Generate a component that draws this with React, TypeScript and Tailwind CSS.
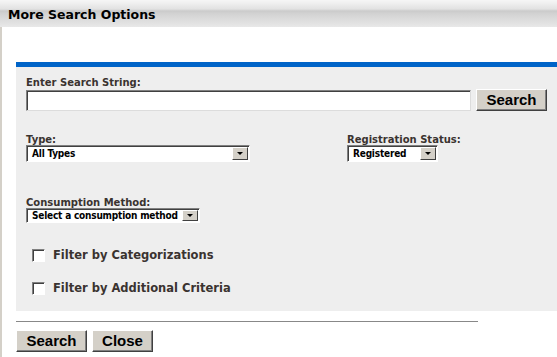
import React from 'react';

const verdana = { fontFamily: '"DejaVu Sans", Verdana, sans-serif' };
const tahoma = {
  fontFamily: '"DejaVu Sans Condensed", "DejaVu Sans", Tahoma, sans-serif',
  fontStretch: 'condensed',
};

function Select({ label, width, height }: { label: string; width: string; height: string }) {
  return (
    <div
      className={`${width} ${height} flex bg-white border border-t-[#808080] border-l-[#808080] border-b-white border-r-white shadow-[inset_1px_1px_0_#404040]`}
    >
      <div
        className="flex-1 pl-[5px] flex items-center text-[10px] leading-[12px] tracking-[-0.2px] font-bold text-black whitespace-nowrap overflow-hidden"
        style={tahoma}
      >
        {label}
      </div>
      <div className="w-[16px] bg-[#d4d0c8] border border-t-white border-l-white border-b-[#404040] border-r-[#404040] flex items-center justify-center mr-px my-px">
        <div className="w-0 h-0 border-l-[3px] border-r-[3px] border-t-[3px] border-l-transparent border-r-transparent border-t-black" />
      </div>
    </div>
  );
}

function Checkbox({ text }: { text: string }) {
  return (
    <div className="flex items-center ml-[6px] h-[13px]">
      <div className="w-[13px] h-[13px] bg-white border border-t-[#808080] border-l-[#808080] border-b-white border-r-white shadow-[inset_1px_1px_0_#404040]" />
      <span className="ml-[8px] text-[11.5px] font-bold text-[#3a3330]">{text}</span>
    </div>
  );
}

function Button({ text, width }: { text: string; width: string }) {
  return (
    <button
      className={`${width} h-[22px] bg-[#d4d0c8] border border-t-white border-l-white border-b-[#404040] border-r-[#404040] shadow-[inset_-1px_-1px_0_#808080] text-[15px] leading-[18px] font-bold text-black`}
      style={{ fontFamily: '"Liberation Sans", Arial, sans-serif' }}
    >
      {text}
    </button>
  );
}

export default function App() {
  return (
    <div className="w-[557px] h-[357px] bg-white overflow-hidden" style={verdana}>
      {/* Title bar */}
      <div className="h-[27px] bg-[linear-gradient(to_bottom,#f6f6f6_0px,#f0f0f0_3px,#e2e2e2_9px,#cbcbcb_11px,#d3d3d3_14px,#e8e8e8_27px)] pl-[8px] pt-[8px]">
        <h1 className="text-[12.5px] leading-[14px] font-bold text-black">More Search Options</h1>
      </div>

      <div className="h-[330px] border-l-2 border-[#d4d0c8] pl-[14px] pt-[35px]">
        <div className="h-[5px] bg-[#0064c8]" />
        <div className="h-[244px] bg-[#eeeeee] pl-[10px] pt-[10px] text-[#3a3330]">
          <div className="text-[10px] leading-[11px] font-bold">Enter Search String:</div>
          <div className="flex items-center">
            <input
              className="w-[445px] h-[21px] bg-white border border-t-[#808080] border-l-[#808080] border-b-[#dcdcdc] border-r-[#dcdcdc] shadow-[inset_1px_1px_0_#404040] outline-none"
            />
            <div className="ml-[5px]">
              <Button text="Search" width="w-[71px]" />
            </div>
          </div>

          <div className="flex mt-[23px]">
            <div className="w-[321px]">
              <div className="text-[10px] leading-[10px] font-bold">Type:</div>
              <Select label="All Types" width="w-[224px]" height="h-[17px]" />
            </div>
            <div>
              <div className="text-[10px] leading-[10px] font-bold">Registration Status:</div>
              <Select label="Registered" width="w-[91px]" height="h-[17px]" />
            </div>
          </div>

          <div className="mt-[35px]">
            <div className="text-[10px] leading-[11px] font-bold">Consumption Method:</div>
            <Select label="Select a consumption method" width="w-[174px]" height="h-[15px]" />
          </div>

          <div className="mt-[26px] flex flex-col gap-[20px]">
            <Checkbox text="Filter by Categorizations" />
            <Checkbox text="Filter by Additional Criteria" />
          </div>
        </div>

        <div className="mt-[10px] w-[462px] h-px bg-[#888888]" />
        <div className="flex gap-[5px] mt-[8px]">
          <Button text="Search" width="w-[71px]" />
          <Button text="Close" width="w-[61px]" />
        </div>
      </div>
    </div>
  );
}
